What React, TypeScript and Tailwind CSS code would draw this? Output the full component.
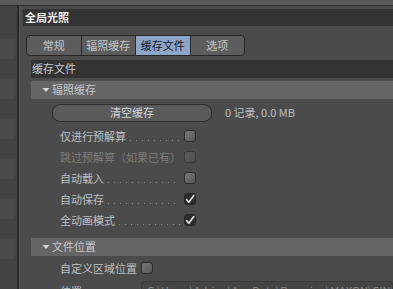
import React from 'react';

const font = { fontFamily: '"Noto Sans CJK SC", "Noto Sans", sans-serif' };

function Check({ checked, disabled }: { checked?: boolean; disabled?: boolean }) {
  if (checked) {
    return (
      <div className="w-[12px] h-[12px] rounded-[3px] border border-[#262626] bg-[#2e2e2e] flex items-center justify-center shrink-0">
        <svg width="10" height="10" viewBox="0 0 10 10">
          <path d="M1.5 5.5 L3.8 8.2 L8.8 1.5" fill="none" stroke="#e4e4e4" strokeWidth="1.6" strokeLinecap="round" strokeLinejoin="round" />
        </svg>
      </div>
    );
  }
  return (
    <div
      className={`w-[12px] h-[12px] rounded-[3px] border shrink-0 ${
        disabled
          ? 'border-[#3a3a3a] bg-gradient-to-br from-[#5e5e5e] to-[#4e4e4e]'
          : 'border-[#2c2c2c] bg-gradient-to-br from-[#7a7a7a] to-[#565656]'
      }`}
    />
  );
}

function Row({ label, checked, disabled, dots = true }: { label: string; checked?: boolean; disabled?: boolean; dots?: boolean }) {
  return (
    <div className="h-[21px] flex items-center pl-[29px]">
      <div className="w-[120px] h-full flex items-center whitespace-nowrap">
        <span className={disabled ? 'text-[#7c7c7c]' : 'text-[#bcc0c4]'}>{label}</span>
        {dots && (
          <div className="flex-1 h-[1px] ml-[4px] mt-[8px] bg-[linear-gradient(to_right,#8a8a8a_1px,transparent_1px)] bg-[length:6px_1px] bg-repeat-x" />
        )}
      </div>
      <div className="ml-[4px]">
        <Check checked={checked} disabled={disabled} />
      </div>
    </div>
  );
}

function SectionHeader({ title }: { title: string }) {
  return (
    <div className="h-[18px] bg-[#656565] flex items-center pl-[11px] text-[#c4c8cc]">
      <svg width="8" height="6" viewBox="0 0 8 6" className="mr-[2px]">
        <path d="M0.5 1 L7.5 1 L4 5 Z" fill="#d8d8d8" />
      </svg>
      <span>{title}</span>
    </div>
  );
}

const tabs = ['常规', '辐照缓存', '缓存文件', '选项'];

export default function App() {
  return (
    <div className="w-[393px] h-[289px] bg-[#4b4b4b] overflow-hidden text-[11px] flex flex-col" style={font}>
      <div className="h-[6px] bg-[#5a5a5a] border-b border-[#2f2f2f] shrink-0" />
      <div className="flex flex-1 min-h-0">
        {/* left list */}
        <div className="w-[17px] shrink-0 flex flex-col bg-[#434343] pt-[33px]">
          {[0, 1, 2, 3, 4, 5].map((i) => (
            <div key={i} className="h-[20px] mb-[20px] w-[15px] bg-[#4a4a4a]" />
          ))}
        </div>
        <div className="w-[2px] shrink-0 bg-[#2a2a2a]" />
        <div className="flex-1 min-w-0 flex flex-col pl-[3px] pt-[3px] bg-[#4b4b4b] border-l border-[#555]">
          <div className="h-[19px] bg-[#333333] flex items-center pl-[2px] text-[#eeeeee] font-bold">
            全局光照
          </div>
          <div className="pt-[9px] pl-[3px] pb-[4px]">
            <div className="flex h-[21px] w-[219px] rounded-[4px] border border-[#262626] overflow-hidden bg-[#5d5d5d]">
              {tabs.map((t, i) => (
                <div
                  key={t}
                  className={`flex items-center justify-center ${i === 0 ? 'w-[54px]' : 'w-[55px]'} ${
                    i > 0 ? 'border-l border-[#2a2a2a]' : ''
                  } ${i === 2 ? 'bg-[#8da5c8] text-[#15181c]' : 'text-[#c2c6ca]'}`}
                >
                  {t}
                </div>
              ))}
            </div>
          </div>
          <div className="ml-[8px] flex flex-col">
            <div className="h-[18px] bg-[#333333] flex items-center pl-[1px] text-[#c8ccd0]">缓存文件</div>
            <div className="h-[3px]" />
            <SectionHeader title="辐照缓存" />
            <div className="flex items-center pt-[5px] pl-[21px]">
              <div className="w-[160px] h-[18px] rounded-[8px] border border-[#2c2c2c] bg-[#5a5a5a] flex items-center justify-center text-[#d2d6da]">
                清空缓存
              </div>
              <span className="ml-[13px] text-[#bcc0c4]">0 记录, 0.0 MB</span>
            </div>
            <div className="h-[4px]" />
            <Row label="仅进行预解算" />
            <Row label="跳过预解算（如果已有）" disabled dots={false} />
            <Row label="自动载入" />
            <Row label="自动保存" checked />
            <Row label="全动画模式" checked />
            <div className="h-[7px]" />
            <SectionHeader title="文件位置" />
            <div className="h-[25px] flex items-center pl-[29px]">
              <span className="text-[#bcc0c4] w-[81px]">自定义区域位置</span>
              <Check />
            </div>
            <div className="flex items-start pl-[29px]">
              <span className="text-[#bcc0c4] w-[81px] pt-[2px]">位置</span>
              <div className="flex-1 min-w-0 h-[18px] bg-[#444444] border border-[#3a3a3a] rounded-[3px] px-[5px] text-[#8a8a8a] whitespace-nowrap overflow-hidden">
                C:\Users\Adrian\AppData\Roaming\MAXON\CINEMA 4D
              </div>
            </div>
          </div>
        </div>
      </div>
    </div>
  );
}
